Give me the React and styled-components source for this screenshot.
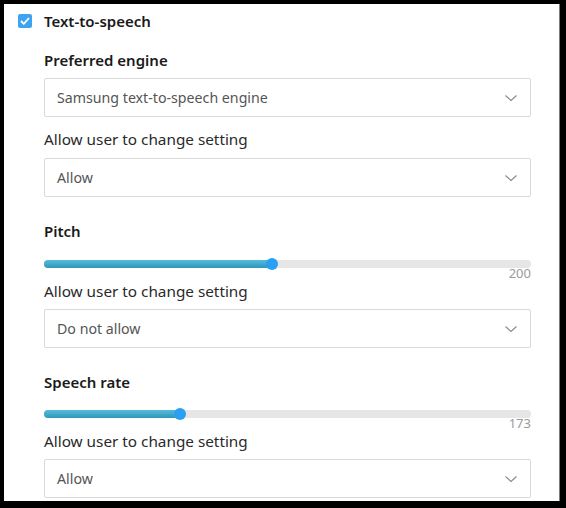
import React from 'react';
import styled, { createGlobalStyle } from 'styled-components';

const GlobalStyle = createGlobalStyle`
  html, body {
    margin: 0;
    padding: 0;
    background: #000;
  }
  body {
    font-family: "Noto Sans", "Open Sans", sans-serif;
    color: #222;
  }
`;

const Frame = styled.div`
  width: 566px;
  height: 508px;
  box-sizing: border-box;
  padding: 4px 6px 7px 4px;
  background: #000;
`;

const Panel = styled.div`
  height: 100%;
  box-sizing: border-box;
  background: #fff;
  border-right: 1px solid #7a7a7a;
  padding: 7px 0 0 14px;
  overflow: hidden;
`;

const Header = styled.label`
  display: flex;
  align-items: center;
  gap: 12px;
  height: 20px;
`;

const CheckBox = styled.span`
  width: 14px;
  height: 14px;
  border-radius: 2px;
  background: #3fa4f0;
  display: flex;
  align-items: center;
  justify-content: center;
`;

const Title = styled.span`
  font-size: 15px;
  font-weight: 600;
  line-height: 20px;
  color: #1a1a1a;
`;

const Body = styled.div`
  width: 487px;
  padding-left: 26px;
  display: flex;
  flex-direction: column;
`;

const SectionTitle = styled.div`
  font-size: 15px;
  font-weight: 600;
  line-height: 20px;
  color: #1a1a1a;
  margin-top: ${p => p.$gap}px;
`;

const FieldLabel = styled.div`
  font-size: 15.3px;
  line-height: 20px;
  color: #2a2a2a;
  margin-top: ${p => p.$gap}px;
`;

const Select = styled.div`
  height: 39px;
  box-sizing: border-box;
  margin-top: ${p => p.$gap}px;
  border: 1px solid #d9d9d9;
  border-radius: 2px;
  display: flex;
  align-items: center;
  justify-content: space-between;
  padding: 0 12px 0 12px;
  font-size: 14.2px;
  color: #555;
`;

const SliderWrap = styled.div`
  margin-top: ${p => p.$gap}px;
  height: 14px;
  display: flex;
  align-items: center;
`;

const Track = styled.div`
  position: relative;
  width: 100%;
  height: 8px;
  border-radius: 4px;
  background: #e6e6e6;
`;

const Fill = styled.div`
  height: 100%;
  border-radius: 4px;
  background: linear-gradient(#55bcdc, #2e98b8);
`;

const Thumb = styled.div`
  position: absolute;
  top: 50%;
  width: 12px;
  height: 12px;
  margin: -6px 0 0 -6px;
  border-radius: 50%;
  background: #2aa0f5;
`;

const Value = styled.div`
  margin-top: -5px;
  text-align: right;
  font-size: 13px;
  line-height: 14px;
  color: #9a9a9a;
`;

const Chevron = () => (
  <svg width="14" height="8" viewBox="0 0 14 8">
    <path d="M1.5 1.5l5.5 5 5.5-5" fill="none" stroke="#888" strokeWidth="1.1" />
  </svg>
);

function Slider({ pos, value, gap }) {
  return (
    <>
      <SliderWrap $gap={gap}>
        <Track>
          <Fill style={{ width: pos }} />
          <Thumb style={{ left: pos }} />
        </Track>
      </SliderWrap>
      <Value>{value}</Value>
    </>
  );
}

export default function App() {
  return (
    <>
      <GlobalStyle />
      <Frame>
        <Panel>
          <Header>
            <CheckBox>
              <svg width="10" height="8" viewBox="0 0 10 8">
                <path d="M1 4l2.8 2.8L9 1" fill="none" stroke="#fff" strokeWidth="1.8" />
              </svg>
            </CheckBox>
            <Title>Text-to-speech</Title>
          </Header>
          <Body>
            <SectionTitle $gap={19}>Preferred engine</SectionTitle>
            <Select $gap={8}>Samsung text-to-speech engine<Chevron /></Select>
            <FieldLabel $gap={12}>Allow user to change setting</FieldLabel>
            <Select $gap={9}>Allow<Chevron /></Select>

            <SectionTitle $gap={24}>Pitch</SectionTitle>
            <Slider gap={16} pos="228px" value="200" />
            <FieldLabel $gap={1}>Allow user to change setting</FieldLabel>
            <Select $gap={8}>Do not allow<Chevron /></Select>

            <SectionTitle $gap={24}>Speech rate</SectionTitle>
            <Slider gap={15} pos="136px" value="173" />
            <FieldLabel $gap={1}>Allow user to change setting</FieldLabel>
            <Select $gap={8}>Allow<Chevron /></Select>
          </Body>
        </Panel>
      </Frame>
    </>
  );
}
